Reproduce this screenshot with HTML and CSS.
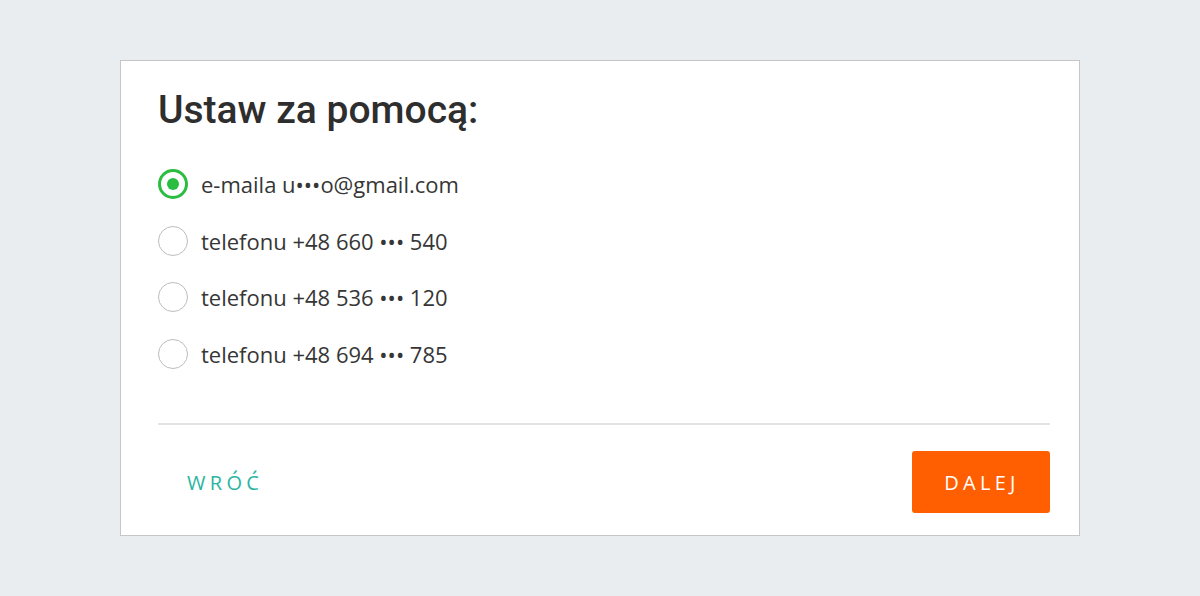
FILE: index.html
```html
<!DOCTYPE html>
<html lang="pl">
<head>
    <meta charset="UTF-8">
    <meta name="viewport" content="width=device-width, initial-scale=1.0">
    <title>Ustaw za pomocą</title>
    <link rel="stylesheet" href="styles.css">
</head>
<body>
    <!-- Okno wyboru metody -->
    <div class="card">
        <h1 class="titulo">Ustaw za pomocą:</h1>

        <ul class="opciones">
            <li class="opcion activa"><span class="radio"></span>e-maila u•••o@gmail.com</li>
            <li class="opcion"><span class="radio"></span>telefonu +48 660 ••• 540</li>
            <li class="opcion"><span class="radio"></span>telefonu +48 536 ••• 120</li>
            <li class="opcion"><span class="radio"></span>telefonu +48 694 ••• 785</li>
        </ul>

        <div class="pie">
            <button class="boton volver">WRÓĆ</button>
            <button class="boton siguiente">DALEJ</button>
        </div>
    </div>
</body>
</html>
```

FILE: styles.css
```css
body {
    margin: 0;
    padding: 60px 0 0 0;
    background: #e9edf0;
    height: 596px;
    box-sizing: border-box;
    font-family: "Open Sans", "Liberation Sans", sans-serif;
}

/* Tarjeta */
.card {
    width: 960px;
    height: 476px;
    margin-left: 120px;
    box-sizing: border-box;
    background: #ffffff;
    border: 1px solid #c4c6c8;
    padding: 26px 29px 22px 37px;
    display: flex;
    flex-direction: column;
}

.titulo {
    margin: 0;
    font-family: Roboto, "Liberation Sans", sans-serif;
    font-weight: 500;
    font-size: 39px;
    line-height: 47px;
    color: #2e2e2e;
}

/* Lista de opciones */
.opciones {
    list-style: none;
    margin: 35px 0 0 0;
    padding: 0;
    display: flex;
    flex-direction: column;
    gap: 26.7px;
}

.opcion {
    display: flex;
    align-items: center;
    gap: 13px;
    height: 30px;
    font-size: 22px;
    color: #363636;
}

.radio {
    width: 30px;
    height: 30px;
    flex-shrink: 0;
    box-sizing: border-box;
    border: 1.5px solid #bdbdbd;
    border-radius: 50%;
    display: flex;
    justify-content: center;
    align-items: center;
}

.activa .radio {
    border: 3px solid #2bbd3f;
}

.activa .radio::after {
    content: "";
    width: 12px;
    height: 12px;
    border-radius: 50%;
    background: #2bbd3f;
}

/* Pie con botones */
.pie {
    margin-top: auto;
    border-top: 2px solid #e2e3e4;
    padding-top: 26px;
    display: flex;
    justify-content: space-between;
    align-items: center;
}

.boton {
    font-family: "Open Sans", "Liberation Sans", sans-serif;
    font-size: 20px;
    letter-spacing: 4.3px;
    border: none;
    cursor: pointer;
    height: 62px;
    border-radius: 3px;
}

.volver {
    background: transparent;
    color: #2ab5a2;
    padding: 0 30px 0 29px;
}

.siguiente {
    background: #ff5f00;
    color: #ffffff;
    width: 138px;
    padding: 0 0 0 2px;
}
```
